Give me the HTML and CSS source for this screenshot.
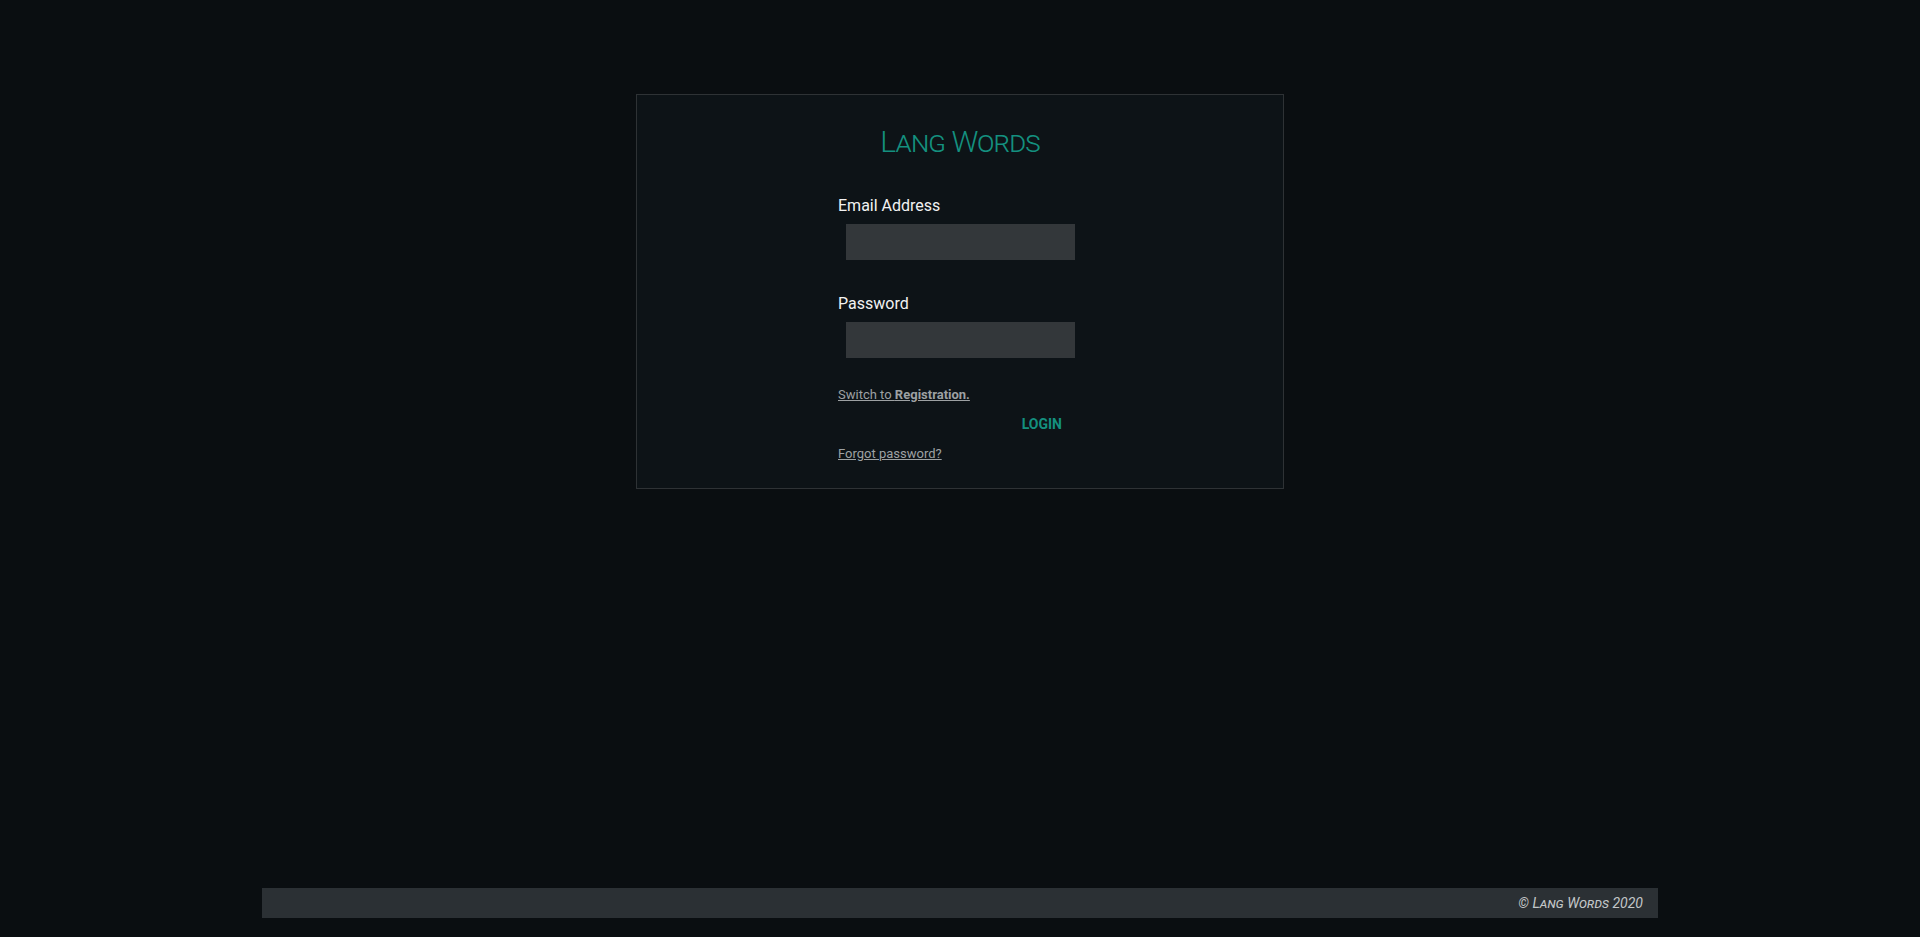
FILE: index.html
```html
<!DOCTYPE html>
<html lang="en">
<head>
<meta charset="utf-8">
<title>Lang Words</title>
<link rel="stylesheet" href="styles.css">
</head>
<body>
<main class="main">
  <section class="card">
    <h1 class="title">Lang Words</h1>
    <form class="form">
      <label class="label" for="email">Email Address</label>
      <input class="input" id="email" type="email">
      <label class="label label-pw" for="pw">Password</label>
      <input class="input" id="pw" type="password">
      <a class="link link-switch" href="#">Switch to <b>Registration.</b></a>
      <div class="actions"><button class="btn" type="button">LOGIN</button></div>
      <a class="link link-forgot" href="#">Forgot password?</a>
    </form>
  </section>
</main>
<footer class="footer"><span class="copy">© Lang Words 2020</span></footer>
</body>
</html>
```

FILE: styles.css
```css
* { box-sizing: border-box; }
html, body { height: 100%; }
body {
  margin: 0;
  background: #0a0e11;
  font-family: Roboto, "Liberation Sans", sans-serif;
  color: #f0f0f0;
  display: flex;
  flex-direction: column;
  min-height: 100vh;
}
.main {
  flex: 1;
  padding-top: 94px;
}
.card {
  width: 648px;
  margin: 0 auto;
  background: #0d1317;
  border: 1px solid #2e3235;
  padding: 29px 0 24px;
}
.title {
  margin: 0;
  text-align: center;
  font-size: 30px;
  line-height: 36px;
  font-weight: 300;
  font-variant: small-caps;
  letter-spacing: -0.9px;
  color: #14907f;
}
.form {
  width: 244px;
  margin: 34px auto 0;
  display: flex;
  flex-direction: column;
  align-items: flex-start;
}
.label {
  display: block;
  font-size: 16px;
  line-height: 24px;
  color: #f2f2f2;
  margin-bottom: 6px;
}
.label-pw { margin-top: 32px; }
.input {
  margin-left: 8px;
  width: 229px;
  height: 36px;
  border: none;
  background: #33373a;
  outline: none;
}
.link {
  font-size: 13px;
  line-height: 20px;
  color: #9da1a3;
  text-decoration: underline;
}
.link b { font-weight: 700; }
.link-switch { margin-top: 27px; }
.actions {
  width: 100%;
  display: flex;
  justify-content: flex-end;
  margin-top: 9px;
}
.btn {
  background: none;
  border: none;
  padding: 0 20px 0 0;
  font-family: inherit;
  font-size: 14px;
  line-height: 20px;
  font-weight: 700;
  color: #14907f;
  cursor: pointer;
}
.link-forgot { margin-top: 10px; }
.footer {
  width: 1396px;
  height: 30px;
  margin: 0 auto 19px;
  background: #2b3034;
  display: flex;
  justify-content: flex-end;
  align-items: center;
  padding-right: 15px;
}
.copy {
  font-size: 14px;
  line-height: 30px;
  font-style: italic;
  font-variant: small-caps;
  color: #c3c7c9;
}
```
